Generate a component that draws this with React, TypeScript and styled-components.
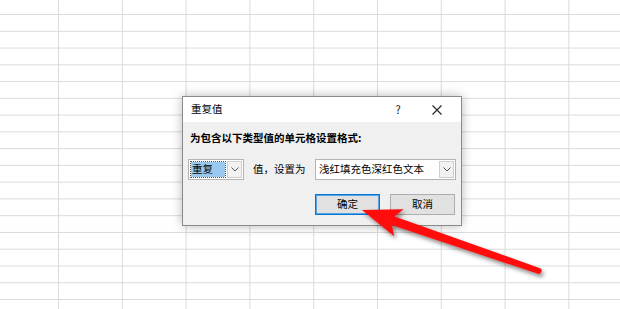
import React from "react";
import styled, { createGlobalStyle } from "styled-components";

const GlobalStyle = createGlobalStyle`
  html, body {
    margin: 0;
    padding: 0;
    background: #ffffff;
  }
  body {
    font-family: "Noto Sans CJK SC", "Noto Sans", sans-serif;
    color: #000;
  }
`;

const Sheet = styled.div`
  position: relative;
  width: 620px;
  height: 309px;
  overflow: hidden;
  background-color: #fff;
  background-image:
    linear-gradient(to right, #dadada 1px, transparent 1px),
    linear-gradient(to bottom, #dadada 1px, transparent 1px);
  background-size: 63.8px 16.78px;
  background-position: 58px 14px;
`;

const Dialog = styled.div`
  position: absolute;
  left: 182px;
  top: 96px;
  width: 278px;
  height: 128px;
  border: 1px solid #8a8a8a;
  background: #f0f0f0;
  box-shadow: 0 0 10px rgba(0, 0, 0, 0.28);
  display: flex;
  flex-direction: column;
  font-size: 10.5px;
  line-height: 1;
  white-space: nowrap;
`;

const TitleBar = styled.div`
  height: 25px;
  background: #fff;
  display: flex;
  align-items: center;
  padding-left: 8px;
`;

const Title = styled.div`
  flex: 1;
  font-size: 10.5px;
`;

const TitleButton = styled.div<{ $w: number }>`
  width: ${({ $w }) => $w}px;
  height: 25px;
  display: flex;
  align-items: center;
  justify-content: center;
  font-size: 11px;
  color: #111;
`;

const Body = styled.div`
  flex: 1;
  display: flex;
  flex-direction: column;
  padding: 9px 6px 10px 5px;
`;

const Prompt = styled.div`
  font-weight: bold;
  margin-left: 2px;
  height: 14px;
  display: flex;
  align-items: center;
`;

const Row = styled.div`
  display: flex;
  align-items: center;
  margin-top: 14px;
  gap: 9px;
`;

const Select = styled.div<{ $w: number }>`
  width: ${({ $w }) => $w}px;
  flex-shrink: 0;
  height: 21px;
  box-sizing: border-box;
  border: 1px solid #b4b4b4;
  background: #fff;
  display: flex;
  align-items: center;
  padding: 0 1px 0 2px;
`;

const SelectText = styled.div<{ $selected?: boolean }>`
  flex: 1;
  height: 15px;
  display: flex;
  align-items: center;
  padding-left: 1px;
  margin-right: 2px;
  background: ${({ $selected }) => ($selected ? "#99c9ef" : "transparent")};
  outline: ${({ $selected }) => ($selected ? "1px dotted #555" : "none")};
`;

const ArrowBox = styled.div`
  width: 15px;
  height: 17px;
  box-sizing: border-box;
  border: 1px solid #cfcfcf;
  background: #f2f2f2;
  display: flex;
  align-items: center;
  justify-content: center;
`;

const RowLabel = styled.div`
  flex-shrink: 0;
  width: 53px;
`;

const Buttons = styled.div`
  display: flex;
  justify-content: flex-end;
  gap: 10px;
  margin-top: auto;
`;

const Button = styled.div<{ $primary?: boolean }>`
  width: 65px;
  height: 21px;
  box-sizing: border-box;
  background: #e1e1e1;
  border: 1px solid ${({ $primary }) => ($primary ? "#0078d7" : "#adadad")};
  box-shadow: ${({ $primary }) => ($primary ? "inset 0 0 0 1px #5aa3e0" : "none")};
  display: flex;
  align-items: center;
  justify-content: center;
  font-size: 10.5px;
`;

const Overlay = styled.svg`
  position: absolute;
  left: 0;
  top: 0;
  pointer-events: none;
`;

const Chevron = () => (
  <svg width="8" height="5" viewBox="0 0 8 5">
    <path d="M0.5 0.5 L4 4 L7.5 0.5" fill="none" stroke="#555" strokeWidth="1" />
  </svg>
);

const CloseIcon = () => (
  <svg width="10" height="10" viewBox="0 0 10 10">
    <path d="M0.5 0.5 L9.5 9.5 M9.5 0.5 L0.5 9.5" stroke="#222" strokeWidth="1.1" />
  </svg>
);

export default function App() {
  return (
    <>
      <GlobalStyle />
      <Sheet>
        <Dialog>
          <TitleBar>
            <Title>重复值</Title>
            <TitleButton $w={30}>?</TitleButton>
            <TitleButton $w={48}>
              <CloseIcon />
            </TitleButton>
          </TitleBar>
          <Body>
            <Prompt>为包含以下类型值的单元格设置格式:</Prompt>
            <Row>
              <Select $w={56}>
                <SelectText $selected>重复</SelectText>
                <ArrowBox>
                  <Chevron />
                </ArrowBox>
              </Select>
              <RowLabel>值，设置为</RowLabel>
              <Select $w={141}>
                <SelectText>浅红填充色深红色文本</SelectText>
                <ArrowBox>
                  <Chevron />
                </ArrowBox>
              </Select>
            </Row>
            <Buttons>
              <Button $primary>确定</Button>
              <Button>取消</Button>
            </Buttons>
          </Body>
        </Dialog>
        <Overlay width="620" height="309" viewBox="0 0 620 309">
          <defs>
            <filter id="arrowShadow" x="-20%" y="-20%" width="140%" height="160%">
              <feDropShadow dx="2" dy="3" stdDeviation="2" floodColor="#000" floodOpacity="0.45" />
            </filter>
          </defs>
          <path
            d="M362 210 L403.6 209.2 L394.7 216.5 L540 268.2 A3 3 0 0 1 538 273.8 L391.7 225.1 L394.2 236.2 Z"
            fill="#ff0a0a"
            filter="url(#arrowShadow)"
          />
        </Overlay>
      </Sheet>
    </>
  );
}
